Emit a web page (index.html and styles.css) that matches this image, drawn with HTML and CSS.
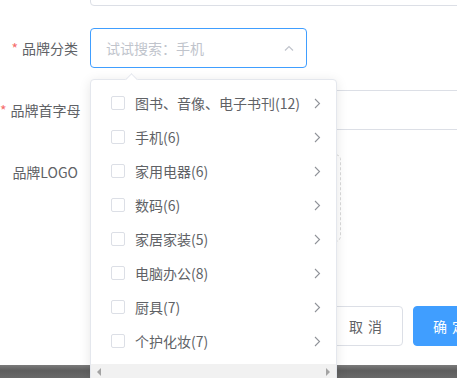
FILE: index.html
```html
<!DOCTYPE html>
<html lang="zh">
<head>
    <meta charset="UTF-8">
    <meta name="viewport" content="width=device-width, initial-scale=1.0">
    <title>品牌编辑</title>
    <link rel="stylesheet" href="styles.css">
</head>
<body>

    <div class="page">
        <div class="brand-form">
            <!-- 品牌名称 -->
            <div class="form-item first">
                <label class="form-label"></label>
                <div class="text-input wide"></div>
            </div>

            <!-- 品牌分类 -->
            <div class="form-item">
                <label class="form-label"><span class="req">*</span>品牌分类</label>
                <div class="cascader-input">
                    <span class="placeholder">试试搜索：手机</span>
                    <svg class="arrow-up" width="10" height="6" viewBox="0 0 10 6">
                        <path d="M1 5.5 L5 1.5 L9 5.5" fill="none" stroke="#c0c4cc" stroke-width="1.2"/>
                    </svg>
                </div>
            </div>

            <!-- 品牌首字母 -->
            <div class="form-item">
                <label class="form-label"><span class="req">*</span>品牌首字母</label>
                <div class="text-input wide"></div>
            </div>

            <!-- 品牌LOGO -->
            <div class="form-item">
                <label class="form-label">品牌LOGO</label>
                <div class="upload-box"></div>
            </div>

            <!-- 按钮 -->
            <div class="form-buttons">
                <button class="btn">取 消</button>
                <button class="btn btn-primary">确 定</button>
            </div>
        </div>

        <div class="bottom-bar"></div>

        <!-- 级联下拉 -->
        <div class="cascader-panel">
            <span class="popper-arrow"></span>
            <ul class="cascader-menu">
                <li class="node"><span class="checkbox"></span><span class="node-label">图书、音像、电子书刊(12)</span><svg class="node-arrow" width="7" height="11" viewBox="0 0 7 11"><path d="M1 1 L5.5 5.5 L1 10" fill="none" stroke="#909399" stroke-width="1.1"/></svg></li>
                <li class="node"><span class="checkbox"></span><span class="node-label">手机(6)</span><svg class="node-arrow" width="7" height="11" viewBox="0 0 7 11"><path d="M1 1 L5.5 5.5 L1 10" fill="none" stroke="#909399" stroke-width="1.1"/></svg></li>
                <li class="node"><span class="checkbox"></span><span class="node-label">家用电器(6)</span><svg class="node-arrow" width="7" height="11" viewBox="0 0 7 11"><path d="M1 1 L5.5 5.5 L1 10" fill="none" stroke="#909399" stroke-width="1.1"/></svg></li>
                <li class="node"><span class="checkbox"></span><span class="node-label">数码(6)</span><svg class="node-arrow" width="7" height="11" viewBox="0 0 7 11"><path d="M1 1 L5.5 5.5 L1 10" fill="none" stroke="#909399" stroke-width="1.1"/></svg></li>
                <li class="node"><span class="checkbox"></span><span class="node-label">家居家装(5)</span><svg class="node-arrow" width="7" height="11" viewBox="0 0 7 11"><path d="M1 1 L5.5 5.5 L1 10" fill="none" stroke="#909399" stroke-width="1.1"/></svg></li>
                <li class="node"><span class="checkbox"></span><span class="node-label">电脑办公(8)</span><svg class="node-arrow" width="7" height="11" viewBox="0 0 7 11"><path d="M1 1 L5.5 5.5 L1 10" fill="none" stroke="#909399" stroke-width="1.1"/></svg></li>
                <li class="node"><span class="checkbox"></span><span class="node-label">厨具(7)</span><svg class="node-arrow" width="7" height="11" viewBox="0 0 7 11"><path d="M1 1 L5.5 5.5 L1 10" fill="none" stroke="#909399" stroke-width="1.1"/></svg></li>
                <li class="node"><span class="checkbox"></span><span class="node-label">个护化妆(7)</span><svg class="node-arrow" width="7" height="11" viewBox="0 0 7 11"><path d="M1 1 L5.5 5.5 L1 10" fill="none" stroke="#909399" stroke-width="1.1"/></svg></li>
            </ul>
            <div class="h-scrollbar">
                <span class="sb-left"></span>
                <span class="sb-right"></span>
            </div>
        </div>
    </div>

</body>
</html>
```

FILE: styles.css
```css
html, body {
    margin: 0;
    padding: 0;
    overflow: hidden;
}
body {
    font-family: "Noto Sans CJK SC", "Noto Sans", sans-serif;
    font-size: 14px;
    color: #606266;
    background: #fff;
}
.page {
    position: relative;
    width: 457px;
    height: 378px;
    overflow: hidden;
}
.brand-form {
    width: 700px;
}
.form-item {
    display: flex;
    align-items: flex-start;
    margin-bottom: 22px;
}
.form-item.first {
    margin-top: -34px;
}
.form-label {
    width: 90px;
    flex: none;
    box-sizing: border-box;
    padding-right: 12px;
    text-align: right;
    line-height: 40px;
    height: 40px;
    white-space: nowrap;
    color: #606266;
}
.req {
    color: #f56c6c;
    margin-right: 4px;
}
.text-input {
    box-sizing: border-box;
    height: 40px;
    border: 1px solid #dcdfe6;
    border-radius: 4px;
    background: #fff;
}
.text-input.wide {
    width: 420px;
}
.cascader-input {
    box-sizing: border-box;
    width: 217px;
    height: 40px;
    border: 1px solid #409eff;
    border-radius: 4px;
    padding: 0 12px 0 15px;
    display: flex;
    align-items: center;
    justify-content: space-between;
}
.placeholder {
    color: #c0c4cc;
    line-height: 38px;
}
.arrow-up {
    margin-right: 0;
}
.upload-box {
    box-sizing: border-box;
    width: 251px;
    height: 88px;
    margin-top: 2px;
    border: 1px dashed #d9d9d9;
    border-radius: 6px;
}
.form-buttons {
    display: flex;
    gap: 10px;
    padding-left: 329px;
    margin-top: 64px;
}
.btn {
    box-sizing: border-box;
    width: 74px;
    height: 40px;
    border: 1px solid #dcdfe6;
    border-radius: 4px;
    background: #fff;
    color: #606266;
    font-family: inherit;
    font-size: 14px;
    padding: 0;
    letter-spacing: 1px;
}
.btn-primary {
    background: #409eff;
    border-color: #409eff;
    color: #fff;
}
.bottom-bar {
    margin-top: 19px;
    height: 14px;
    background: linear-gradient(#7b7b7b, #5e5e5e 40%, #6a6a6a);
}

/* 级联下拉面板 */
.cascader-panel {
    position: absolute;
    left: 90px;
    top: 79px;
    width: 247px;
    box-sizing: border-box;
    background: #fff;
    border: 1px solid #e4e7ed;
    border-radius: 4px;
    box-shadow: 0 2px 12px rgba(0, 0, 0, 0.1);
}
.popper-arrow {
    position: absolute;
    left: 36px;
    top: -5px;
    width: 8px;
    height: 8px;
    background: #fff;
    border-left: 1px solid #e4e7ed;
    border-top: 1px solid #e4e7ed;
    transform: rotate(45deg);
}
.cascader-menu {
    list-style: none;
    margin: 0;
    padding: 6px 0;
}
.node {
    display: flex;
    align-items: center;
    height: 34px;
    padding: 0 15px 0 20px;
    white-space: nowrap;
}
.checkbox {
    box-sizing: border-box;
    width: 14px;
    height: 14px;
    border: 1px solid #dcdfe6;
    border-radius: 2px;
    margin-right: 10px;
    flex: none;
}
.node-label {
    flex: 1;
    line-height: 20px;
}
.node-arrow {
    flex: none;
}
.h-scrollbar {
    position: relative;
    height: 17px;
    background: #f1f1f1;
}
.sb-left,
.sb-right {
    position: absolute;
    top: 4px;
    width: 0;
    height: 0;
    border-top: 4px solid transparent;
    border-bottom: 4px solid transparent;
}
.sb-left {
    left: 6px;
    border-right: 4px solid #a3a3a3;
}
.sb-right {
    right: 6px;
    border-left: 4px solid #a3a3a3;
}
```
